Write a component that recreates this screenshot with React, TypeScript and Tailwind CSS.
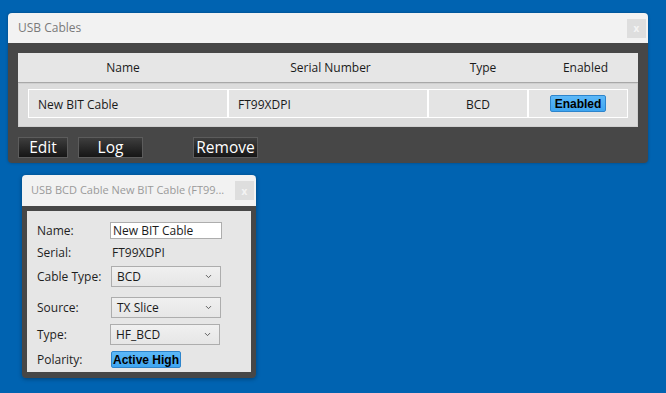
import { ChevronDown } from 'lucide-react';

const font = { fontFamily: '"Open Sans", "Noto Sans", sans-serif' };

function CloseButton() {
  return (
    <div className="w-[19px] h-[19px] shrink-0 bg-[#dedede] flex items-center justify-center text-[10px] leading-none text-[#f4f4f4] font-bold">
      x
    </div>
  );
}

function DarkButton({ label, width }: { label: string; width: string }) {
  return (
    <div
      className={`${width} h-[21px] border border-[#5c5c5c] bg-gradient-to-b from-[#3e3e3e] to-[#161616] text-white text-[15.5px] leading-none flex items-center justify-center`}
    >
      {label}
    </div>
  );
}

function BlueBadge({ label, width, height }: { label: string; width: string; height: string }) {
  return (
    <div
      className={`${width} ${height} rounded-[2px] border border-[#2d84cc] bg-gradient-to-b from-[#5cb8f8] to-[#3ea5f0] font-bold text-black leading-none flex items-center justify-center whitespace-nowrap`}
      style={{ fontFamily: '"Liberation Sans", Arial, sans-serif', fontSize: '12px' }}
    >
      {label}
    </div>
  );
}

function SelectBox({ value }: { value: string }) {
  return (
    <div className="w-[110px] h-[21px] border border-[#adadad] bg-gradient-to-b from-[#f0f0f0] to-[#e6e6e6] flex items-center justify-between pl-[5px] pr-[7px]">
      <span className="text-[12px] text-[#1a1a1a] leading-none">{value}</span>
      <ChevronDown className="w-[9px] h-[9px] text-[#555]" strokeWidth={2.5} />
    </div>
  );
}

function FormRow({ label, children, className }: { label: string; children: React.ReactNode; className: string }) {
  return (
    <div className={`flex items-center ${className}`}>
      <div className="w-[73px] text-[12px] text-[#1e1e1e] leading-none">{label}</div>
      {children}
    </div>
  );
}

export default function App() {
  const cable = { name: 'New BIT Cable', serial: 'FT99XDPI', type: 'BCD' };

  return (
    <div className="w-[666px] h-[393px] bg-[#0063b1] overflow-hidden pt-[13px]" style={font}>
      {/* USB Cables window */}
      <div className="ml-[8px] w-[640px] rounded-[4px] overflow-hidden shadow-[0_0_3px_rgba(0,0,0,0.3)]">
        <div className="h-[30px] bg-[#f2f2f2] flex items-center justify-between pl-[10px] pr-[2px]">
          <span className="text-[12px] text-[#7a7a7a]">USB Cables</span>
          <CloseButton />
        </div>
        <div className="bg-[#474747] px-[10px] pt-[10px] pb-[5px]">
          <div className="bg-[#e6e6e6]">
            <div className="h-[30px] flex items-center text-[12px] text-[#1a1a1a] border-b border-[#a8a8a8]">
              <div className="w-[210px] text-center">Name</div>
              <div className="w-[205px] text-center">Serial Number</div>
              <div className="w-[100px] text-center">Type</div>
              <div className="w-[105px] text-center">Enabled</div>
            </div>
            <div className="h-[44px] bg-[#dcdcdc] border border-[#cfcfcf] pt-[5px] pl-[9px] pr-[9px]">
              <div className="flex h-[29px] text-[12px] text-[#1a1a1a]">
                <div className="w-[200px] border border-white bg-[#e4e4e4] flex items-center pl-[9px] pt-[2px]">{cable.name}</div>
                <div className="w-[200px] border border-white bg-[#e4e4e4] flex items-center pl-[9px] pt-[2px]">{cable.serial}</div>
                <div className="w-[100px] border border-white bg-[#e4e4e4] flex items-center justify-center pt-[2px]">{cable.type}</div>
                <div className="w-[100px] border border-white bg-[#e4e4e4] flex items-center justify-center">
                  <BlueBadge label="Enabled" width="w-[56px]" height="h-[17px]" />
                </div>
              </div>
            </div>
          </div>
          <div className="flex mt-[10px]">
            <DarkButton label="Edit" width="w-[50px]" />
            <div className="ml-[10px]">
              <DarkButton label="Log" width="w-[65px]" />
            </div>
            <div className="ml-[50px]">
              <DarkButton label="Remove" width="w-[65px]" />
            </div>
          </div>
        </div>
      </div>

      {/* Cable edit window */}
      <div className="ml-[22px] mt-[12px] w-[234px] rounded-[4px] overflow-hidden shadow-[0_1px_4px_rgba(0,0,0,0.35)]">
        <div className="h-[31px] bg-[#f2f2f2] flex items-center justify-between pl-[9px] pr-[2px] gap-[3px]">
          <span className="text-[11px] text-[#9a9a9a] whitespace-nowrap">USB BCD Cable New BIT Cable (FT99...</span>
          <CloseButton />
        </div>
        <div className="bg-[#474747] p-[5px] pb-[6px]">
          <div className="bg-[#e6e6e6] h-[161px] pl-[10px] pt-[11px] flex flex-col">
            <FormRow label="Name:" className="h-[17px]">
              <div className="w-[112px] h-[17px] bg-white border border-[#adadad] flex items-center pl-[2px] text-[12px] text-[#1a1a1a] leading-none">
                {cable.name}
              </div>
            </FormRow>
            <FormRow label="Serial:" className="h-[16px] mt-[6px]">
              <span className="text-[12px] text-[#1e1e1e] leading-none ml-[2px]">{cable.serial}</span>
            </FormRow>
            <FormRow label="Cable Type:" className="h-[21px] mt-[5px]">
              <div className="ml-[1px]">
                <SelectBox value="BCD" />
              </div>
            </FormRow>
            <FormRow label="Source:" className="h-[21px] mt-[10px]">
              <div className="ml-[1px]">
                <SelectBox value="TX Slice" />
              </div>
            </FormRow>
            <FormRow label="Type:" className="h-[21px] mt-[6px]">
              <SelectBox value="HF_BCD" />
            </FormRow>
            <FormRow label="Polarity:" className="h-[17px] mt-[6px]">
              <div className="ml-[1px]">
                <BlueBadge label="Active High" width="w-[70px]" height="h-[17px]" />
              </div>
            </FormRow>
          </div>
        </div>
      </div>
    </div>
  );
}
